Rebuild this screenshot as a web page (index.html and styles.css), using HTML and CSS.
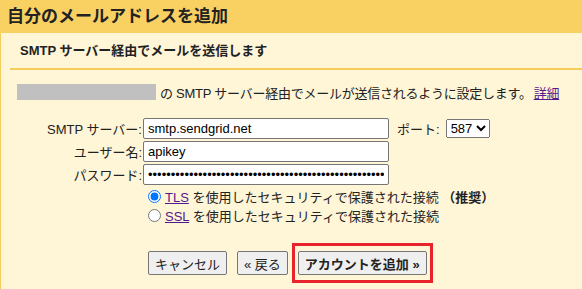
FILE: index.html
```html
<!DOCTYPE html>
<html lang="ja">
<head>
<meta charset="utf-8">
<link rel="stylesheet" href="styles.css">
</head>
<body>
<div class="header">自分のメールアドレスを追加</div>
<div class="panel">
  <div class="subtitle">SMTP サーバー経由でメールを送信します</div>
  <div class="divider"></div>
  <div class="desc"><span class="redact"></span><span class="desc-text">の SMTP サーバー経由でメールが送信されるように設定します。<a href="#" class="link">詳細</a></span></div>
  <div class="form">
    <div class="row">
      <label class="lbl">SMTP サーバー:</label>
      <input class="field" type="text" value="smtp.sendgrid.net">
      <span class="port-lbl">ポート:</span>
      <select class="port"><option>587</option></select>
    </div>
    <div class="row">
      <label class="lbl">ユーザー名:</label>
      <input class="field" type="text" value="apikey">
    </div>
    <div class="row">
      <label class="lbl">パスワード:</label>
      <input class="field" type="password" value="xxxxxxxxxxxxxxxxxxxxxxxxxxxxxxxxxxxxxxxxxxxxxxxxxxxxxxxxxxxx">
    </div>
    <div class="radios">
      <label class="radio"><input type="radio" name="sec" checked><span class="radio-text"><a href="#" class="link">TLS</a> を使用したセキュリティで保護された接続 <b>（推奨）</b></span></label>
      <label class="radio"><input type="radio" name="sec"><span class="radio-text"><a href="#" class="link">SSL</a> を使用したセキュリティで保護された接続</span></label>
    </div>
    <div class="buttons">
      <button class="btn">キャンセル</button>
      <button class="btn">« 戻る</button>
      <span class="highlight"><button class="btn primary">アカウントを追加 »</button></span>
    </div>
  </div>
</div>
</body>
</html>
```

FILE: styles.css
```css
html, body {
  margin: 0;
  padding: 0;
}
body {
  background: #fff5d7;
  font-family: "Liberation Sans", Arial, "Noto Sans CJK JP", sans-serif;
  font-size: 13px;
  color: #222;
  width: 582px;
  height: 289px;
  overflow: hidden;
}
.header {
  background: #f9d163;
  height: 33px;
  line-height: 33px;
  padding-left: 7px;
  font-size: 17px;
  font-weight: bold;
  color: #222;
}
.panel {
  border-left: 1px solid #f5cd5c;
  height: 256px;
}
.subtitle {
  padding-left: 19px;
  height: 35px;
  line-height: 35px;
  font-weight: bold;
  font-size: 13px;
}
.divider {
  margin-left: 9px;
  height: 2px;
  background: #f5cd5c;
}
.desc {
  display: flex;
  align-items: center;
  margin-top: 14px;
  padding-left: 16px;
  height: 16px;
}
.redact {
  width: 139px;
  height: 16px;
  background: #c0c0c0;
  margin-right: 4px;
}
.desc-text {
  white-space: nowrap;
  letter-spacing: -0.25px;
}
.desc-text .link {
  margin-left: 2px;
}
.link {
  color: #551a8b;
  text-decoration: underline;
}
.form {
  margin-top: 17px;
}
.row {
  display: flex;
  align-items: center;
  height: 23px;
}
.lbl {
  width: 141px;
  text-align: right;
  margin-right: 1px;
  white-space: nowrap;
}
.field {
  box-sizing: border-box;
  width: 246px;
  height: 21px;
  margin: 0;
  padding: 1px 4px;
  border: 1px solid #767676;
  border-radius: 2px;
  background: #fff;
  font-family: "Liberation Sans", Arial, "Noto Sans CJK JP", sans-serif;
  font-size: 13px;
  color: #000;
}
.port-lbl {
  margin-left: 8px;
  margin-right: 6px;
}
.port {
  box-sizing: border-box;
  height: 19px;
  width: 44px;
  margin: 0;
  font-family: "Liberation Sans", Arial, sans-serif;
  font-size: 13px;
}
.radios {
  margin-top: 1px;
  padding-left: 142px;
}
.radio {
  display: flex;
  align-items: center;
  height: 19px;
  white-space: nowrap;
}
.radio input {
  margin: 0 4px 0 5px;
  width: 13px;
  height: 13px;
}
.buttons {
  display: flex;
  align-items: center;
  margin-top: 18px;
  padding-left: 147px;
}
.btn {
  box-sizing: border-box;
  height: 24px;
  padding: 0 6px;
  margin: 0;
  border: 1px solid #767676;
  border-radius: 2px;
  background: #efefef;
  font-family: "Liberation Sans", Arial, "Noto Sans CJK JP", sans-serif;
  font-size: 13px;
  color: #222;
}
.btn + .btn {
  margin-left: 10px;
}
.highlight {
  margin-left: 4px;
  padding: 5px 3px;
  border: 3px solid #e8232b;
  display: flex;
}
.primary {
  font-weight: bold;
}
```
